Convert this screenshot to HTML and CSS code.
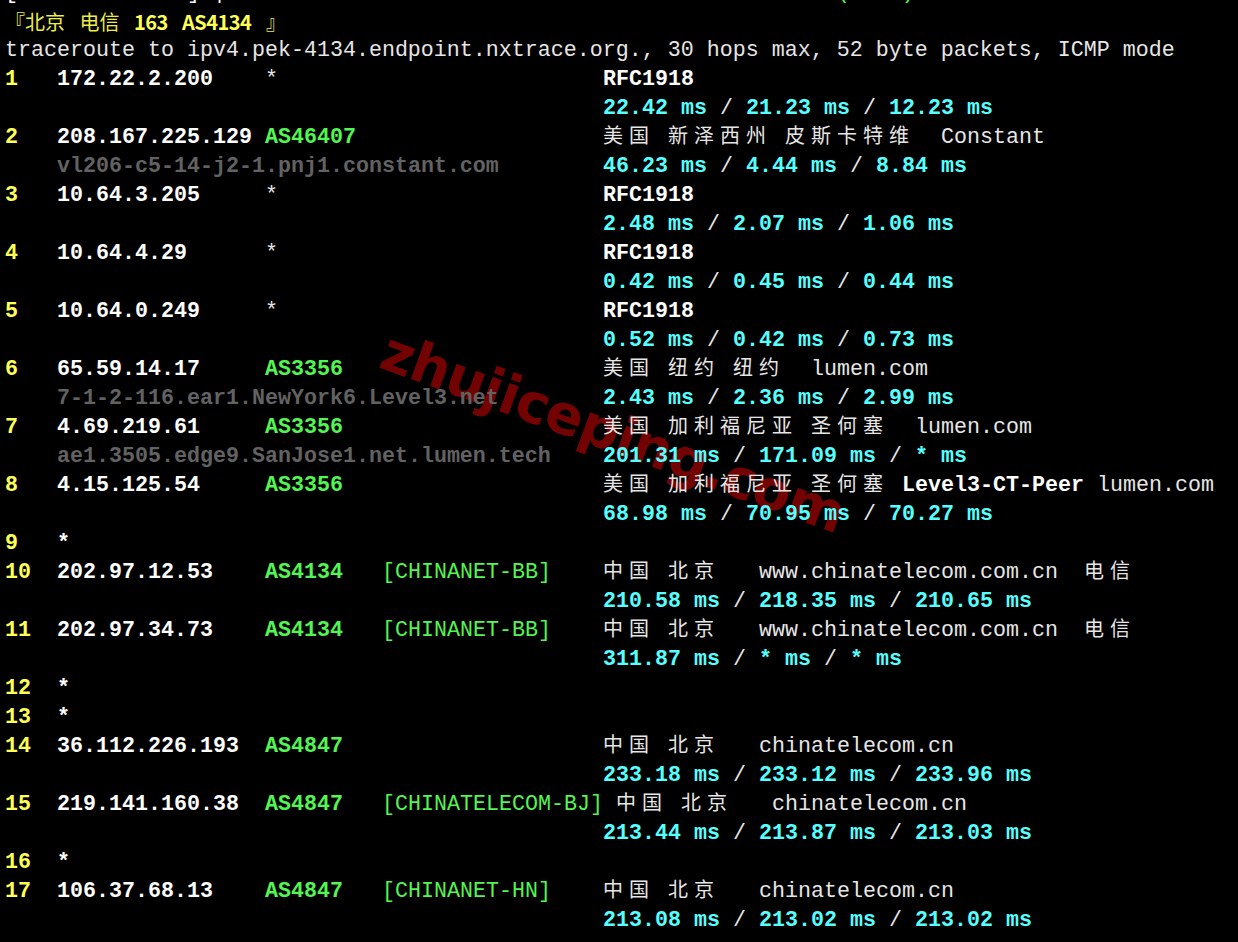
FILE: index.html
```html
<!DOCTYPE html>
<html lang="zh-CN">
<head>
<meta charset="utf-8">
<title>nexttrace</title>
<link rel="stylesheet" href="styles.css">
</head>
<body>
<div class="wm">zhujiceping.com</div>
<main class="term">
  <div class="row"><span class="full"><span class="w">[</span>             <span class="w">]</span> <span class="w">|</span>                                             <span class="g"><span class="cj">速</span>(ICMP)</span></span></div>
  <div class="row"><span class="full head">『北京 电信 <b>163 AS4134</b> 』</span></div>
  <div class="row"><span class="full txt">traceroute to ipv4.pek-4134.endpoint.nxtrace.org., 30 hops max, 52 byte packets, ICMP mode</span></div>

  <div class="row"><span class="n">1</span><span class="ip">172.22.2.200</span><span class="star">*</span><span></span><span class="rfc">RFC1918</span></div>
  <div class="row"><span class="lat"><b>22.42 ms</b> / <b>21.23 ms</b> / <b>12.23 ms</b></span></div>

  <div class="row"><span class="n">2</span><span class="ip">208.167.225.129</span><span class="as">AS46407</span><span></span><span class="geo"><span class="cj">美国</span> <span class="cj">新泽西州</span> <span class="cj">皮斯卡特维</span>  Constant</span></div>
  <div class="row"><span></span><span class="host">vl206-c5-14-j2-1.pnj1.constant.com</span><span class="lat"><b>46.23 ms</b> / <b>4.44 ms</b> / <b>8.84 ms</b></span></div>

  <div class="row"><span class="n">3</span><span class="ip">10.64.3.205</span><span class="star">*</span><span></span><span class="rfc">RFC1918</span></div>
  <div class="row"><span class="lat"><b>2.48 ms</b> / <b>2.07 ms</b> / <b>1.06 ms</b></span></div>

  <div class="row"><span class="n">4</span><span class="ip">10.64.4.29</span><span class="star">*</span><span></span><span class="rfc">RFC1918</span></div>
  <div class="row"><span class="lat"><b>0.42 ms</b> / <b>0.45 ms</b> / <b>0.44 ms</b></span></div>

  <div class="row"><span class="n">5</span><span class="ip">10.64.0.249</span><span class="star">*</span><span></span><span class="rfc">RFC1918</span></div>
  <div class="row"><span class="lat"><b>0.52 ms</b> / <b>0.42 ms</b> / <b>0.73 ms</b></span></div>

  <div class="row"><span class="n">6</span><span class="ip">65.59.14.17</span><span class="as">AS3356</span><span></span><span class="geo"><span class="cj">美国</span> <span class="cj">纽约</span> <span class="cj">纽约</span>  lumen.com</span></div>
  <div class="row"><span></span><span class="host">7-1-2-116.ear1.NewYork6.Level3.net</span><span class="lat"><b>2.43 ms</b> / <b>2.36 ms</b> / <b>2.99 ms</b></span></div>

  <div class="row"><span class="n">7</span><span class="ip">4.69.219.61</span><span class="as">AS3356</span><span></span><span class="geo"><span class="cj">美国</span> <span class="cj">加利福尼亚</span> <span class="cj">圣何塞</span>  lumen.com</span></div>
  <div class="row"><span></span><span class="host">ae1.3505.edge9.SanJose1.net.lumen.tech</span><span class="lat"><b>201.31 ms</b> / <b>171.09 ms</b> / <b>* ms</b></span></div>

  <div class="row"><span class="n">8</span><span class="ip">4.15.125.54</span><span class="as">AS3356</span><span></span><span class="geo"><span class="cj">美国</span> <span class="cj">加利福尼亚</span> <span class="cj">圣何塞</span> <strong>Level3-CT-Peer</strong> lumen.com</span></div>
  <div class="row"><span class="lat"><b>68.98 ms</b> / <b>70.95 ms</b> / <b>70.27 ms</b></span></div>

  <div class="row"><span class="n">9</span><span class="ip">*</span></div>

  <div class="row"><span class="n">10</span><span class="ip">202.97.12.53</span><span class="as">AS4134</span><span class="net">[CHINANET-BB]</span><span class="geo"><span class="cj">中国</span> <span class="cj">北京</span>   www.chinatelecom.com.cn  <span class="cj">电信</span></span></div>
  <div class="row"><span class="lat"><b>210.58 ms</b> / <b>218.35 ms</b> / <b>210.65 ms</b></span></div>

  <div class="row"><span class="n">11</span><span class="ip">202.97.34.73</span><span class="as">AS4134</span><span class="net">[CHINANET-BB]</span><span class="geo"><span class="cj">中国</span> <span class="cj">北京</span>   www.chinatelecom.com.cn  <span class="cj">电信</span></span></div>
  <div class="row"><span class="lat"><b>311.87 ms</b> / <b>* ms</b> / <b>* ms</b></span></div>

  <div class="row"><span class="n">12</span><span class="ip">*</span></div>
  <div class="row"><span class="n">13</span><span class="ip">*</span></div>

  <div class="row"><span class="n">14</span><span class="ip">36.112.226.193</span><span class="as">AS4847</span><span></span><span class="geo"><span class="cj">中国</span> <span class="cj">北京</span>   chinatelecom.cn</span></div>
  <div class="row"><span class="lat"><b>233.18 ms</b> / <b>233.12 ms</b> / <b>233.96 ms</b></span></div>

  <div class="row"><span class="n">15</span><span class="ip">219.141.160.38</span><span class="as">AS4847</span><span class="net">[CHINATELECOM-BJ]</span><span class="geo"> <span class="cj">中国</span> <span class="cj">北京</span>   chinatelecom.cn</span></div>
  <div class="row"><span class="lat"><b>213.44 ms</b> / <b>213.87 ms</b> / <b>213.03 ms</b></span></div>

  <div class="row"><span class="n">16</span><span class="ip">*</span></div>

  <div class="row"><span class="n">17</span><span class="ip">106.37.68.13</span><span class="as">AS4847</span><span class="net">[CHINANET-HN]</span><span class="geo"><span class="cj">中国</span> <span class="cj">北京</span>   chinatelecom.cn</span></div>
  <div class="row"><span class="lat"><b>213.08 ms</b> / <b>213.02 ms</b> / <b>213.02 ms</b></span></div>
</main>
</body>
</html>
```
FILE: styles.css
```css
html, body {
  margin: 0;
  padding: 0;
  background: #000;
  overflow: hidden;
}

body {
  position: relative;
  width: 1238px;
  height: 942px;
}

.wm {
  position: absolute;
  left: 613px;
  top: 433px;
  transform: translate(-50%, -50%) rotate(20deg);
  font-family: "DejaVu Sans", "Liberation Sans", sans-serif;
  font-weight: bold;
  font-size: 55px;
  line-height: 1;
  letter-spacing: -1px;
  color: #730202;
  white-space: nowrap;
  z-index: 0;
}

.term {
  position: relative;
  z-index: 1;
  margin-top: -22px;
  padding-left: 5px;
  font-family: "Liberation Mono", "DejaVu Sans Mono", monospace;
  font-size: 21.67px;
  line-height: 29px;
  color: #e6e6e6;
}

.row {
  display: grid;
  grid-template-columns: 52px 208px 117px 221px 1fr;
  height: 29px;
  white-space: pre;
}

.full {
  grid-column: 1 / -1;
}

.w { color: #fff; }
.g { color: #52f552; }

.head {
  font-family: "Noto Sans CJK SC", sans-serif;
  font-size: 20px;
  line-height: 1;
  align-self: center;
  word-spacing: 10px;
  color: #eded4c;
}
.head b {
  color: #ffff55;
  font-weight: bold;
  letter-spacing: -0.5px;
}

.txt { color: #e6e6e6; }

.n {
  grid-column: 1;
  color: #ffff55;
  font-weight: bold;
}

.ip {
  grid-column: 2;
  color: #fff;
  font-weight: bold;
}

.star {
  grid-column: 3;
  color: #e6e6e6;
}

.as {
  grid-column: 3;
  color: #52f552;
  font-weight: bold;
}

.net {
  grid-column: 4;
  color: #52f552;
}

.rfc {
  grid-column: 5;
  color: #fff;
  font-weight: bold;
}

.geo {
  grid-column: 5;
  color: #e6e6e6;
}
.geo strong {
  color: #fff;
  font-weight: bold;
}

.cj {
  font-family: "Noto Sans CJK SC", sans-serif;
  font-size: 20px;
  letter-spacing: 6px;
  line-height: 1;
}

.host {
  grid-column: 2 / 5;
  color: #626262;
  font-weight: bold;
}

.lat {
  grid-column: 5;
  color: #e6e6e6;
}
.lat b {
  color: #55ffff;
  font-weight: bold;
}
```
